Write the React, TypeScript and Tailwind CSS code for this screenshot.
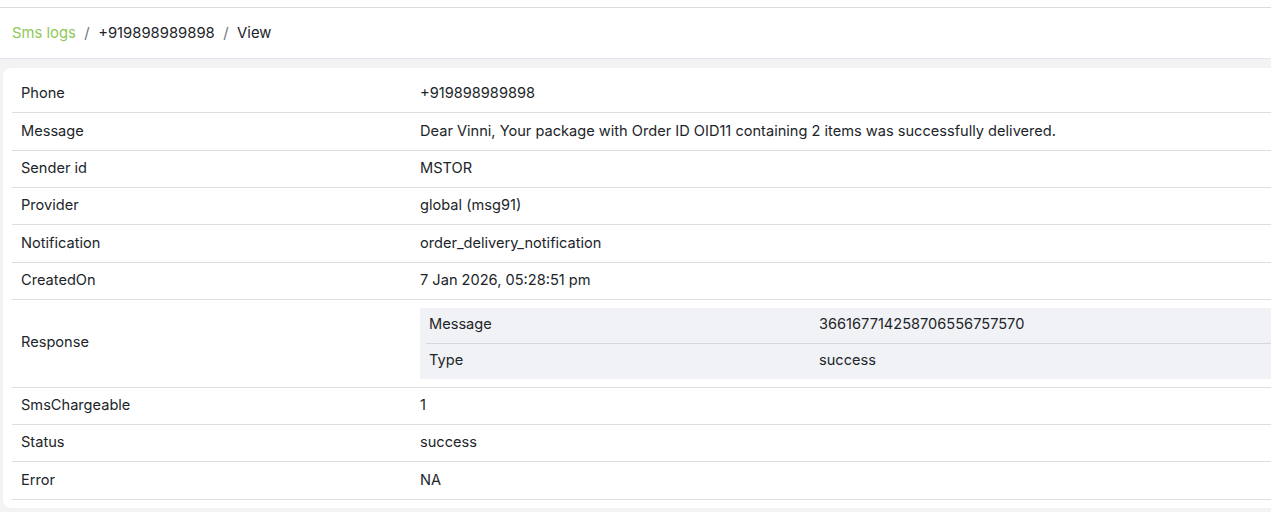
import React from "react";

const rows: [string, string][] = [
  ["Phone", "+919898989898"],
  ["Message", "Dear Vinni, Your package with Order ID OID11 containing 2 items was successfully delivered."],
  ["Sender id", "MSTOR"],
  ["Provider", "global (msg91)"],
  ["Notification", "order_delivery_notification"],
  ["CreatedOn", "7 Jan 2026, 05:28:51 pm"],
];
const rows2: [string, string][] = [
  ["SmsChargeable", "1"],
  ["Status", "success"],
  ["Error", "NA"],
];

function Row({ k, v }: { k: string; v: string }) {
  return (
    <div className="flex border-b border-[#dedede] h-[37.33px] items-center">
      <div className="w-[408px] shrink-0 pl-[9px]">{k}</div>
      <div className="flex-1 whitespace-nowrap">{v}</div>
    </div>
  );
}

export default function App() {
  return (
    <div
      className="w-[1271px] h-[512px] overflow-hidden bg-[#f3f3f4] text-[14.6px] text-[#212529]"
      style={{ fontFamily: "Inter, 'Noto Sans', sans-serif" }}
    >
      <div className="h-[7px] bg-white border-b border-[#dcdcdc] box-content" />
      <div className="h-[50px] bg-white border-b border-[#e6e4f3] flex items-center pl-[12px] text-[14.8px] box-content">
        <span className="text-[#8cc955]">Sms logs</span>
        <span className="text-[#6c757d] mx-[8.5px]">/</span>
        <span>+919898989898</span>
        <span className="text-[#6c757d] mx-[8.5px]">/</span>
        <span>View</span>
      </div>
      <div className="pt-[9px] pl-[3px]">
        <div className="bg-white rounded-l-[8px] pl-[9px] pt-[8px] pb-[8px] w-[1280px]">
          {rows.map(([k, v]) => (
            <Row key={k} k={k} v={v} />
          ))}
          <div className="flex border-b border-[#dedede] h-[87.7px] items-center">
            <div className="w-[408px] shrink-0 pl-[9px]">Response</div>
            <div className="flex-1 bg-[#f1f2f5] h-[71px] flex flex-col">
              <div className="flex h-[36px] items-center border-b border-[#d6d7db] mx-[6px]">
                <div className="w-[393px] shrink-0 pl-[3px]">Message</div>
                <div>366167714258706556757570</div>
              </div>
              <div className="flex h-[35px] items-center mx-[6px]">
                <div className="w-[393px] shrink-0 pl-[3px]">Type</div>
                <div>success</div>
              </div>
            </div>
          </div>
          {rows2.map(([k, v]) => (
            <Row key={k} k={k} v={v} />
          ))}
        </div>
      </div>
    </div>
  );
}
